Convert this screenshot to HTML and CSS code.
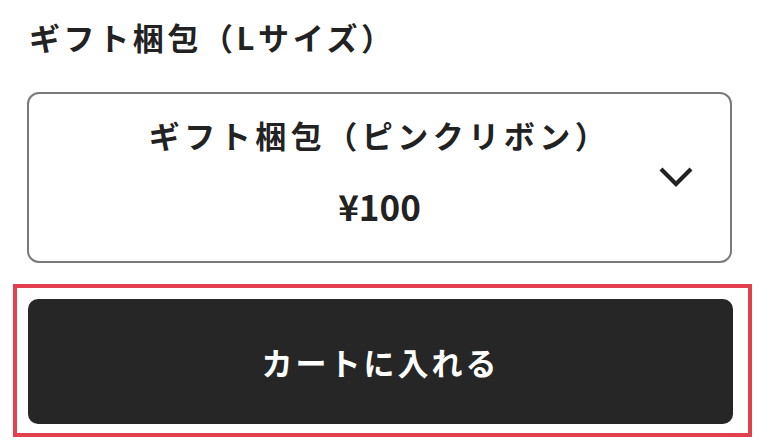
FILE: index.html
```html
<!DOCTYPE html>
<html lang="ja">
<head>
<meta charset="UTF-8">
<meta name="viewport" content="width=device-width, initial-scale=1.0">
<title>ギフト梱包</title>
<link rel="stylesheet" href="styles.css">
</head>
<body>
    <div class="wrapper">
        <h2 class="option-title">ギフト梱包（Lサイズ）</h2>
        <div class="option-select">
            <div class="option-text">
                <div class="option-name">ギフト梱包（ピンクリボン）</div>
                <div class="option-price">¥100</div>
            </div>
            <svg class="chevron" width="36" height="22" viewBox="0 0 36 22">
                <polyline points="3,3 18,18 33,3" fill="none" stroke="#222" stroke-width="4.2"/>
            </svg>
        </div>
        <div class="cart-focus">
            <button class="cart-btn">カートに入れる</button>
        </div>
    </div>
</body>
</html>
```

FILE: styles.css
```css
body{
    margin: 0;
    background: #ffffff;
    font-family: "Noto Sans CJK JP", "Noto Sans", sans-serif;
    color: #222222;
}
.wrapper{
    width: 774px;
    padding-top: 17px;
}
.option-title{
    margin: 0 0 35px 29px;
    height: 40px;
    line-height: 40px;
    font-size: 31px;
    font-weight: bold;
    letter-spacing: 3.6px;
}
.option-select{
    position: relative;
    box-sizing: border-box;
    width: 705px;
    height: 171px;
    margin-left: 27px;
    border: 2px solid #7a7a7a;
    border-radius: 12px;
    padding-top: 6px;
}
.option-text{
    text-align: center;
    font-weight: bold;
    font-size: 31px;
    line-height: 70px;
}
.option-name{
    letter-spacing: 4.5px;
}
.option-price{
    font-size: 35px;
    letter-spacing: 0;
    line-height: 72px;
}
.chevron{
    position: absolute;
    left: 629px;
    top: 72px;
}
.cart-focus{
    width: 739px;
    box-sizing: border-box;
    margin: 21px 0 0 13px;
    border: 4px solid #e3404f;
    padding: 11px 15px 9px 11px;
}
.cart-btn{
    display: block;
    width: 705px;
    height: 125px;
    border: none;
    border-radius: 10px;
    background: #262626;
    color: #ffffff;
    font-family: "Noto Sans CJK JP", "Noto Sans", sans-serif;
    font-size: 31px;
    font-weight: bold;
    letter-spacing: 3px;
}
```
